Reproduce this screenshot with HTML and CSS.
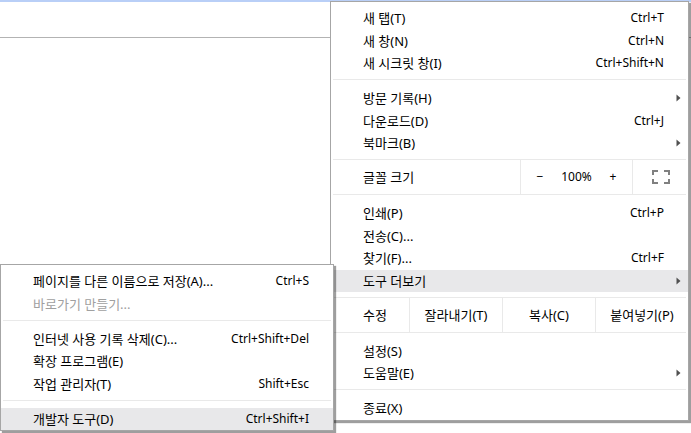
FILE: index.html
```html
<!DOCTYPE html>
<html lang="ko">
<head>
<meta charset="utf-8">
<title>Menu</title>
<link rel="stylesheet" href="styles.css">
</head>
<body>
<div class="page">
  <div class="topbar"></div>
  <div class="toolbar"></div>

  <div class="menu main-menu">
    <div class="item"><span class="label">새 탭(T)</span><span class="accel">Ctrl+T</span></div>
    <div class="item"><span class="label">새 창(N)</span><span class="accel">Ctrl+N</span></div>
    <div class="item"><span class="label">새 시크릿 창(I)</span><span class="accel">Ctrl+Shift+N</span></div>
    <div class="sep"></div>
    <div class="item has-sub"><span class="label">방문 기록(H)</span><svg class="arrow" width="5" height="8" viewBox="0 0 5 8"><path d="M0.5 0.5 L4.5 4 L0.5 7.5Z"/></svg></div>
    <div class="item"><span class="label">다운로드(D)</span><span class="accel">Ctrl+J</span></div>
    <div class="item has-sub"><span class="label">북마크(B)</span><svg class="arrow" width="5" height="8" viewBox="0 0 5 8"><path d="M0.5 0.5 L4.5 4 L0.5 7.5Z"/></svg></div>
    <div class="sep sep-before-row"></div>
    <div class="zoom-row">
      <div class="row-label">글꼴 크기</div>
      <div class="zoom-ctrl">
        <span class="zoom-btn">−</span>
        <span class="zoom-value">100%</span>
        <span class="zoom-btn">+</span>
      </div>
      <div class="fullscreen">
        <svg width="18" height="14" viewBox="0 0 18 14"><path d="M1 5V1H6M12 1H17V5M17 9V13H12M6 13H1V9"/></svg>
      </div>
    </div>
    <div class="sep sep-after-row"></div>
    <div class="item"><span class="label">인쇄(P)</span><span class="accel">Ctrl+P</span></div>
    <div class="item"><span class="label">전송(C)...</span></div>
    <div class="item"><span class="label">찾기(F)...</span><span class="accel">Ctrl+F</span></div>
    <div class="item has-sub active"><span class="label">도구 더보기</span><svg class="arrow" width="5" height="8" viewBox="0 0 5 8"><path d="M0.5 0.5 L4.5 4 L0.5 7.5Z"/></svg></div>
    <div class="sep sep-before-row"></div>
    <div class="edit-row">
      <div class="row-label">수정</div>
      <div class="edit-cell">잘라내기(T)</div>
      <div class="edit-cell">복사(C)</div>
      <div class="edit-cell">붙여넣기(P)</div>
    </div>
    <div class="sep sep-after-row"></div>
    <div class="item"><span class="label">설정(S)</span></div>
    <div class="item has-sub"><span class="label">도움말(E)</span><svg class="arrow" width="5" height="8" viewBox="0 0 5 8"><path d="M0.5 0.5 L4.5 4 L0.5 7.5Z"/></svg></div>
    <div class="sep"></div>
    <div class="item"><span class="label">종료(X)</span></div>
  </div>

  <div class="menu sub-menu">
    <div class="item"><span class="label">페이지를 다른 이름으로 저장(A)...</span><span class="accel">Ctrl+S</span></div>
    <div class="item disabled"><span class="label">바로가기 만들기...</span></div>
    <div class="sep"></div>
    <div class="item"><span class="label">인터넷 사용 기록 삭제(C)...</span><span class="accel">Ctrl+Shift+Del</span></div>
    <div class="item"><span class="label">확장 프로그램(E)</span></div>
    <div class="item"><span class="label">작업 관리자(T)</span><span class="accel">Shift+Esc</span></div>
    <div class="sep"></div>
    <div class="item active"><span class="label">개발자 도구(D)</span><span class="accel">Ctrl+Shift+I</span></div>
  </div>
</div>
</body>
</html>
```

FILE: styles.css
```css
html, body {
  margin: 0;
  padding: 0;
}

body {
  width: 691px;
  height: 433px;
  overflow: hidden;
  background: #ffffff;
  font-family: "Noto Sans", "Noto Sans CJK KR", sans-serif;
  font-size: 12px;
  color: #000000;
}

.page {
  position: relative;
  width: 691px;
  height: 433px;
}

.topbar {
  height: 2px;
  background: #b9cff7;
}

.toolbar {
  height: 35px;
  border-bottom: 1px solid #b3b3b3;
}

.menu {
  position: absolute;
  background: #ffffff;
  border: 1px solid #a6a6a6;
  box-shadow: 2px 2px 1px rgba(0, 0, 0, 0.38);
}

.main-menu {
  left: 330px;
  top: 1px;
  width: 357px;
  padding-top: 5px;
  z-index: 1;
}

.sub-menu {
  left: 0;
  top: 264px;
  width: 332px;
  padding-top: 5px;
  z-index: 2;
}

.item {
  display: flex;
  align-items: center;
  height: 22.5px;
  line-height: 22.5px;
  padding: 0 24px 0 32px;
  white-space: nowrap;
}

.item .label {
  flex: 1;
  font-size: 13px;
}

.item.has-sub {
  padding-right: 7px;
}

.item.active {
  background: #e8e8ea;
}

.item.disabled {
  color: #a0a0a0;
}

.arrow {
  display: block;
  fill: #505050;
}

.sep {
  height: 1px;
  background: #e9e9e9;
  margin: 4.5px 2px 7px;
}

.sep-before-row {
  margin-bottom: 0;
}

.sep-after-row {
  margin-top: 0;
}

.zoom-row,
.edit-row {
  display: flex;
  height: 34px;
  line-height: 34px;
  white-space: nowrap;
}

.row-label {
  flex: 1;
  padding-left: 32px;
  font-size: 13px;
}

.zoom-ctrl {
  display: flex;
  width: 111px;
  border-left: 1px solid #e9e9e9;
}

.zoom-btn {
  width: 38px;
  text-align: center;
}

.zoom-value {
  flex: 1;
  text-align: center;
}

.fullscreen {
  width: 55px;
  border-left: 1px solid #e9e9e9;
  display: flex;
  align-items: center;
  justify-content: center;
}

.fullscreen svg {
  display: block;
  fill: none;
  stroke: #808080;
  stroke-width: 2;
}

.edit-cell {
  width: 92px;
  border-left: 1px solid #e9e9e9;
  text-align: center;
  font-size: 13px;
}
```
